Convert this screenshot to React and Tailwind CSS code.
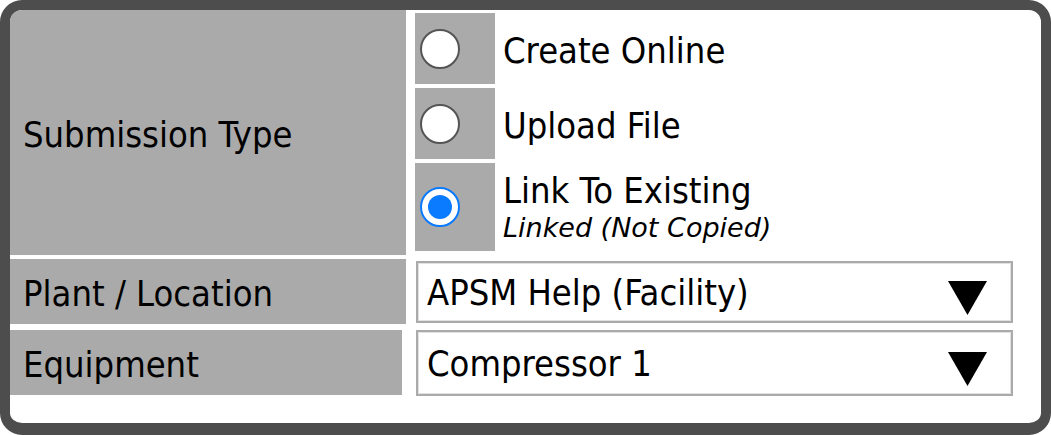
import React from 'react';

const labelCls = 'bg-[#aaaaaa] flex items-center pl-[13px] pt-[4px] text-[36px] leading-none';

function Radio({ checked }) {
  if (checked) {
    return (
      <div className="w-[40px] h-[40px] rounded-full border-2 border-[#0a7aff] bg-white flex items-center justify-center">
        <div className="w-[24px] h-[24px] rounded-full bg-[#0a7aff]" />
      </div>
    );
  }
  return <div className="w-[40px] h-[40px] rounded-full border-2 border-[#555555] bg-white" />;
}

function Option({ height, checked, children }) {
  return (
    <div className={`flex ${height}`}>
      <div className="w-[80px] bg-[#aaaaaa] flex items-center pl-[5px]">
        <Radio checked={checked} />
      </div>
      <div className="ml-[8px] pt-[4px] flex flex-col justify-center">{children}</div>
    </div>
  );
}

function Select({ value, extra }) {
  return (
    <div className={`ml-[10px] w-[597px] border-2 border-[#aaaaaa] shadow-[inset_0_0_0_1px_#e2e2e2] bg-white flex items-center pl-[9px] pr-[24px] ${extra}`}>
      <span className="text-[36px] leading-none flex-1 pt-[2px]">{value}</span>
      <svg width="39" height="34" viewBox="0 0 39 34" className="mt-[12px]">
        <polygon points="0,0 39,0 19.5,34" fill="#000" />
      </svg>
    </div>
  );
}

export default function App() {
  return (
    <div className="w-[1051px] h-[435px] bg-white border-[10px] border-b-[12px] border-[#4d4d4d] rounded-[22px] flex flex-col text-black font-['DejaVu_Sans_Condensed','DejaVu_Sans',sans-serif] overflow-hidden">
      <div className="flex h-[245px]">
        <div className={`w-[396px] ${labelCls}`}>Submission Type</div>
        <div className="ml-[9px] pt-[3px] flex flex-col gap-[4px]">
          <Option height="h-[71px]">
            <span className="text-[36px] leading-none">Create Online</span>
          </Option>
          <Option height="h-[71px]">
            <span className="text-[36px] leading-none">Upload File</span>
          </Option>
          <Option height="h-[88px]" checked>
            <span className="text-[36px] leading-[38px]">Link To Existing</span>
            <span className="text-[27px] italic leading-[36px] font-['DejaVu_Sans',sans-serif]">Linked (Not Copied)</span>
          </Option>
        </div>
      </div>
      <div className="flex h-[65px] mt-[4px] items-start">
        <div className={`w-[396px] h-[65px] ${labelCls}`}>Plant / Location</div>
        <Select value="APSM Help (Facility)" extra="mt-[2px] h-[62px]" />
      </div>
      <div className="flex h-[66px] mt-[6px] items-start">
        <div className={`w-[392px] h-[65px] ${labelCls}`}>Equipment</div>
        <Select value="Compressor 1" extra="ml-[14px] h-[66px]" />
      </div>
    </div>
  );
}
